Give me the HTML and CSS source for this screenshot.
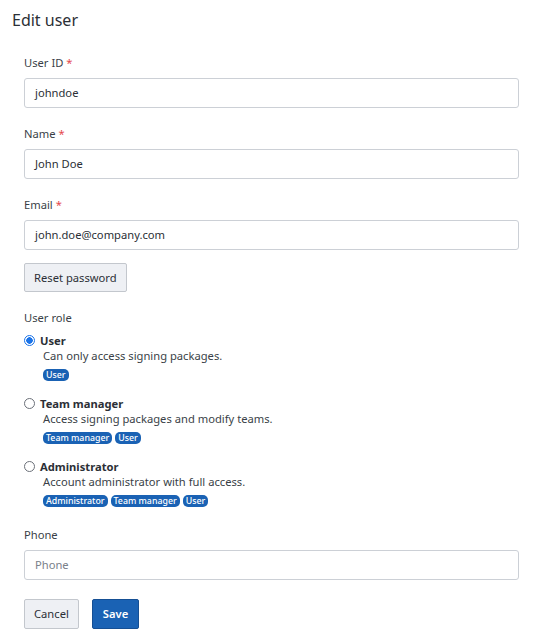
FILE: index.html
```html
<!DOCTYPE html>
<html>
<head>
<meta charset="utf-8">
<link rel="stylesheet" href="styles.css">
</head>
<body>
<div class="page">
  <h1 class="title">Edit user</h1>
  <form class="form">
    <div class="field">
      <label class="label">User ID <span class="req">*</span></label>
      <div class="input">johndoe</div>
    </div>
    <div class="field">
      <label class="label">Name <span class="req">*</span></label>
      <div class="input">John Doe</div>
    </div>
    <div class="field field-tight">
      <label class="label">Email <span class="req">*</span></label>
      <div class="input">john.doe@company.com</div>
    </div>
    <div class="reset-row"><span class="btn btn-secondary">Reset password</span></div>
    <div class="roles">
      <div class="label">User role</div>
      <div class="role">
        <div class="role-head"><span class="radio checked"></span><span class="role-name">User</span></div>
        <div class="role-desc">Can only access signing packages.</div>
        <div class="badges"><span class="badge">User</span></div>
      </div>
      <div class="role">
        <div class="role-head"><span class="radio"></span><span class="role-name">Team manager</span></div>
        <div class="role-desc">Access signing packages and modify teams.</div>
        <div class="badges"><span class="badge">Team manager</span><span class="badge">User</span></div>
      </div>
      <div class="role">
        <div class="role-head"><span class="radio"></span><span class="role-name">Administrator</span></div>
        <div class="role-desc">Account administrator with full access.</div>
        <div class="badges"><span class="badge">Administrator</span><span class="badge">Team manager</span><span class="badge">User</span></div>
      </div>
    </div>
    <div class="field">
      <label class="label">Phone</label>
      <div class="input placeholder">Phone</div>
    </div>
    <div class="actions">
      <span class="btn btn-secondary">Cancel</span>
      <span class="btn btn-primary">Save</span>
    </div>
  </form>
</div>
</body>
</html>
```
FILE: styles.css
```css
* { box-sizing: border-box; }
html, body { margin: 0; padding: 0; background: #fff; }
body {
  font-family: "Noto Sans", "Open Sans", sans-serif;
  font-size: 11.2px;
  color: #2b2f36;
}
.page { padding: 8px 23px 0 12px; }
.title {
  margin: 0;
  font-size: 16px;
  font-weight: 400;
  line-height: 24px;
  color: #2b2f36;
}
.form { padding: 23px 0 0 12px; display: flex; flex-direction: column; }
.field { display: flex; flex-direction: column; margin-bottom: 18px; }
.field-tight { margin-bottom: 13px; }
.label {
  display: block;
  line-height: 16px;
  margin-bottom: 7px;
  color: #3a3f47;
}
.req { color: #e5484d; }
.input {
  height: 30px;
  border: 1px solid #ccd0d6;
  border-radius: 3px;
  padding: 0 10px;
  line-height: 28px;
  color: #2b2f36;
}
.placeholder { color: #7a808a; }
.reset-row { display: flex; margin-bottom: 18px; }
.btn {
  display: inline-flex;
  align-items: center;
  justify-content: center;
  height: 29px;
  padding: 0 9px;
  border-radius: 2px;
  border: 1px solid #c3c7cd;
  line-height: 1;
}
.btn-secondary { background: #eef0f4; color: #2b2f36; }
.btn-primary {
  background: #1a62b4;
  border-color: #154f94;
  color: #fff;
  font-weight: 600;
  padding: 0 10px;
}
.roles { display: flex; flex-direction: column; margin-bottom: 20px; }
.roles .label { margin-bottom: 6px; }
.role { display: flex; flex-direction: column; margin-bottom: 14px; }
.role:last-child { margin-bottom: 0; }
.role-head { display: flex; align-items: center; height: 16px; }
.radio {
  width: 11px;
  height: 11px;
  border: 1px solid #6b7079;
  border-radius: 50%;
  margin-right: 5px;
  flex: none;
  background: #fff;
}
.radio.checked {
  border: 1px solid #1a73e8;
  background: radial-gradient(circle, #1a73e8 0 3px, #fff 3.5px);
}
.role-name { font-weight: 700; color: #2b2f36; }
.role-desc { padding-left: 19px; line-height: 16px; color: #3a3f47; }
.badges { display: flex; gap: 3px; padding-left: 19px; margin-top: 5px; }
.badge {
  display: inline-block;
  background: #1a62b4;
  color: #fff;
  font-size: 8.8px;
  font-weight: 500;
  line-height: 12px;
  height: 12px;
  padding: 0 3px;
  border-radius: 5px;
}
.actions { display: flex; gap: 13px; margin-top: 1px; }
.actions .btn { height: 30px; }
```
